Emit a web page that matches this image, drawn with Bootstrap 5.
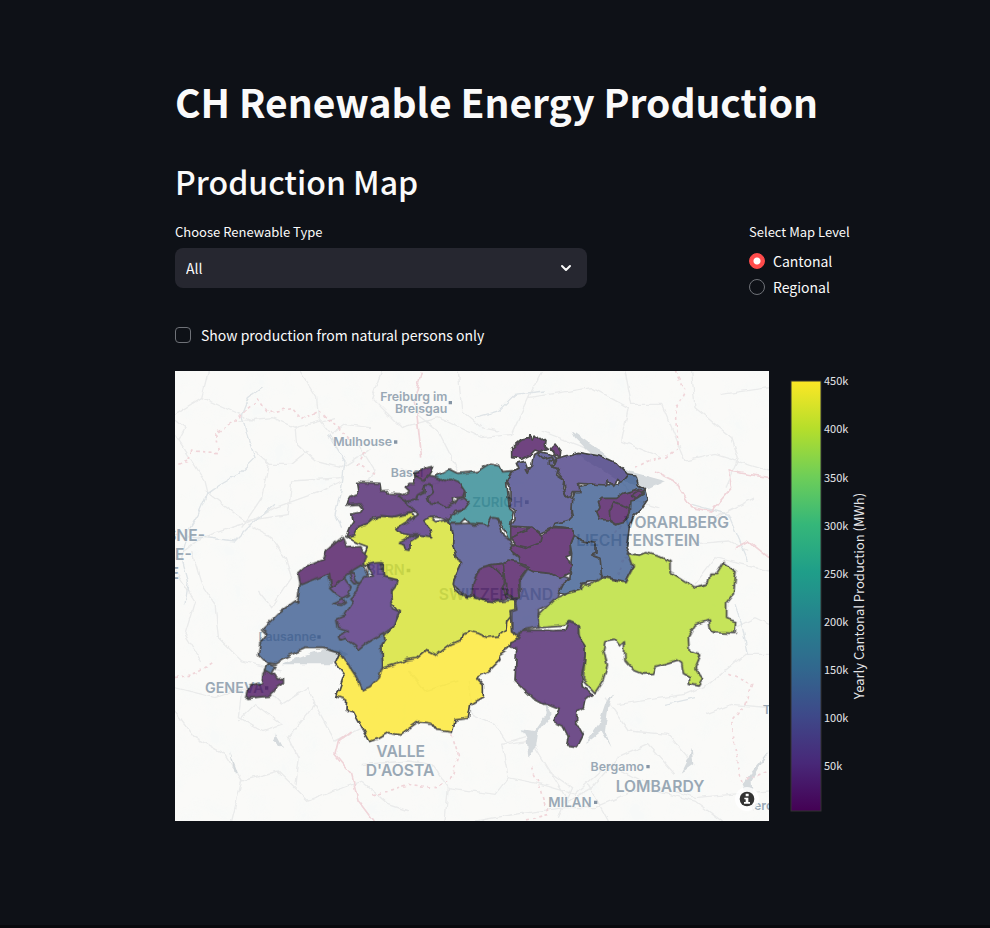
<!DOCTYPE html>
<html lang="en">
<head>
<meta charset="utf-8">
<meta name="viewport" content="width=device-width, initial-scale=1">
<title>CH Renewable Energy Production</title>
<link href="https://cdn.jsdelivr.net/npm/bootstrap@5.3.0/dist/css/bootstrap.min.css" rel="stylesheet">
<style>
body{background:#0e1117;color:#fafafa;font-family:"Noto Sans CJK SC","Open Sans",sans-serif;font-size:14px;line-height:24px}
.page{border-bottom:3px solid #08090d}
.content{max-width:895px;padding:75px 16px 80px 175px}
h1{font-size:39px;line-height:52px;font-weight:700;margin:0 0 34px;white-space:nowrap}
h2{font-size:32px;line-height:40px;font-weight:500;margin:0 0 21px}
.field-label{display:block;font-size:13px;line-height:20px;margin:0 0 6px;padding:0;float:none}
.type-col{width:412px}
.level-col{width:130px}
.type-select{background:#262730;border:0;border-radius:8px;color:#fafafa;height:40px;padding:0 11px;appearance:none}
.chev{right:15px;top:14px;pointer-events:none}
.choice{min-height:26px;gap:8px}
.form-check-input.dot,.form-check-input.tick{width:16px;height:16px;margin:0;background-color:#0e1117;border:1px solid #6f7278;float:none;flex:none}
.form-check-input.dot:checked{background:radial-gradient(circle,#fff 0 3px,#ff4b4b 4px);border-color:#ff4b4b}
.form-check-input.tick{border-radius:4px}
.natural{gap:10px;margin:23px 0 24px}
.map-box{flex:594 1 0;min-width:0;background:#fafaf8}
.scale-box{flex:110 1 0;min-width:0}
.map-box svg,.scale-box svg{display:block;width:100%;height:auto}
.places text{font-family:Inter,"Open Sans",sans-serif;font-weight:600;fill:#99a8b5;stroke:#fafaf8;stroke-width:3;paint-order:stroke}
.scale-box text{fill:#e4e5e8;font-family:"Noto Sans CJK SC","Open Sans",sans-serif}
.cantons path{stroke:#141414;stroke-width:5;stroke-linejoin:round}
.roads{fill:none;stroke:#eaebeb;stroke-width:4}
.rivers{fill:none;stroke:#dfe4e7;stroke-width:4}
.lakes{fill:#d5dadd}
.borders{fill:none;stroke:#f0d5d9;stroke-width:5}
</style>
</head>
<body>
<main class="page min-vh-100">
<div class="content">
<h1>CH Renewable Energy Production</h1>
<h2>Production Map</h2>
<div class="d-flex flex-wrap justify-content-between">
<div class="type-col">
<label class="field-label" for="type">Choose Renewable Type</label>
<div class="position-relative">
<select id="type" class="type-select w-100"><option>All</option><option>Solar</option><option>Wind</option><option>Hydro</option><option>Biomass</option></select>
<svg class="chev position-absolute" width="12" height="12" viewBox="0 0 12 12" fill="none" stroke="#fafafa" stroke-width="2" stroke-linecap="round" stroke-linejoin="round" aria-hidden="true"><path d="M2 4l4 4 4-4"/></svg>
</div>
</div>
<fieldset class="level-col">
<legend class="field-label">Select Map Level</legend>
<div class="choice d-flex align-items-center"><input class="form-check-input dot" type="radio" name="level" id="cantonal" checked><label for="cantonal">Cantonal</label></div>
<div class="choice d-flex align-items-center"><input class="form-check-input dot" type="radio" name="level" id="regional"><label for="regional">Regional</label></div>
</fieldset>
</div>
<div class="natural d-flex align-items-center"><input class="form-check-input tick" type="checkbox" id="natural"><label for="natural">Show production from natural persons only</label></div>

<div class="d-flex">
<div class="map-box">
<svg viewBox="0 0 1782 1350" role="img" aria-label="Map of yearly renewable production by canton">
<defs>
<filter id="rough" x="0" y="0" width="1782" height="1350" filterUnits="userSpaceOnUse"><feTurbulence type="fractalNoise" baseFrequency=".045" numOctaves="1" seed="8"/><feDisplacementMap in="SourceGraphic" scale="17" xChannelSelector="R" yChannelSelector="G"/></filter>
<filter id="soft" x="0" y="0" width="1782" height="1350" filterUnits="userSpaceOnUse"><feTurbulence type="fractalNoise" baseFrequency=".014" numOctaves="3" seed="4"/><feColorMatrix values="0 0 0 0 .925  0 0 0 0 .95  0 0 0 0 .94  3 0 0 0 -1.35"/></filter>
<clipPath id="frame"><path d="M0 0h1782v1350H0z"/></clipPath>
</defs>
<path fill="#fafaf8" d="M0 0h1782v1350H0z"/>
<path filter="url(#soft)" opacity=".5" d="M0 0h1782v1350H0z"/>
<g clip-path="url(#frame)">
<g filter="url(#rough)">
<g class="roads">
<path d="M100 0L80 80 0 130M80 80L170 120 240 150M0 145L30 170 10 210M375 0L425 80 430 140 470 190 510 160 585 170M190 150L290 140 360 170 480 140M360 165L365 220 420 270 500 290 585 235M240 240L285 280 350 280 400 240M280 280L260 380 200 470M100 370L90 330 0 190M90 360L210 450 340 430 350 330 500 320M0 560L80 500 230 450 300 410 440 360 500 330M220 460L290 500 330 560 350 620 290 710 250 660M50 540L80 640 120 700 130 800 200 870 320 900M0 600L60 690 30 790 80 870"/>
<path d="M0 1020L60 1100 150 1150 200 1230 170 1350M200 1230L310 1200 400 1290 560 1230 640 1300 700 1320M0 950L120 980 180 960 260 940 320 1000 400 950 420 1000 340 1100 370 1160 360 1240M190 1050L240 1000 320 1060 260 1080 190 1040 200 960M420 1000L480 1110 560 1070M560 1180L700 1170 770 1180 820 1250 810 1350M820 1250L960 1270 1000 1220 1100 1240 1200 1270 1300 1180 1400 1230 1560 1280 1782 1260M1000 1220L980 1120 1050 1100M880 930L890 1030 960 1060 1000 1120 1070 1110 1180 1290 1250 1250 1330 1160 1420 1120 1500 1210M900 1350L1020 1330 1170 1310 1260 1310 1400 1250 1560 1290 1640 1350M1240 1240L1300 1350M1150 1340L1190 1250 1120 1200"/>
<path d="M620 0L590 80 680 170 790 140 920 200 1010 190 1060 80 1100 0M850 0L860 120 920 170 970 180M700 110L790 180 850 300 760 350 680 290M550 220L600 300 570 350M1100 180L1230 230 1320 300 1380 390 1450 410M1060 80L1250 50 1360 110 1340 210 1460 260M1350 0L1370 100 1460 100 1530 270 1620 250 1782 300M1550 0L1560 110 1670 200 1690 260 1650 350M1640 70L1782 50M1620 440L1740 380M1540 520L1660 510 1720 540M1560 640L1620 560 1782 600M1640 790L1740 740 1782 760M1330 1000L1530 970 1600 940 1710 850 1782 850M1590 1030L1670 1000 1782 1010M1290 980L1360 1080 1480 1090 1540 1160"/>
</g>
<g class="rivers"><path d="M260 50L220 80 200 130 215 190 240 260 190 310 130 345 95 370 70 430 40 480 20 560 40 630 30 700M0 490L180 510 230 460 300 400M460 190L510 270 500 350 480 430 500 470M900 140L970 120 1020 70 1110 60M1550 400L1660 430 1720 570M700 900L750 960 850 930M1470 1000L1560 980M1720 850L1700 760 1680 700"/></g>
<g class="lakes"><path d="M1190 180L1290 250 1320 280 1360 300 1470 330 1420 355 1320 320 1190 240 1250 250 1200 200ZM1110 985L1130 1030 1085 1090 1080 1130 1060 1160 1055 1105 1040 1075 1080 1080 1115 1030ZM1315 970L1300 1010 1290 1080 1310 1130 1280 1080 1230 1120 1270 1060 1290 1000ZM1550 1130L1555 1180 1520 1205 1540 1165ZM1782 1140L1730 1230 1735 1320 1700 1240ZM300 1090L325 1135 295 1110ZM165 1140L190 1210 180 1210ZM320 880Q470 810 520 850L470 880 380 880Z"/></g>
<g class="borders">
<path stroke-dasharray="9 10" d="M10 280L40 270 50 240 130 245 125 185 180 150 210 120 250 85 280 125 350 110 380 145 430 120 480 160 530 210M570 240L550 280 600 310M1500 0L1530 60 1500 120 1510 230 1470 260 1420 270 1380 290M1310 500L1350 450 1370 410M1320 630L1350 560 1370 560M0 920L60 910 120 870M1660 910L1730 940 1710 1000 1670 1050 1680 1130 1700 1230 1782 1200M830 1090L850 1150 830 1220 780 1250 700 1240 590 1275M1070 1190L1100 1260 1120 1330 1040 1350"/>
<path d="M530 1080L490 1110 480 1150 530 1210 550 1290 595 1350"/><path d="M1440 300L1500 330 1550 410 1610 420 1670 350 1660 300 1782 320M1680 530L1720 510 1782 560M740 0L720 80 740 260"/>
</g>
</g>
<g class="places" font-size="37" text-anchor="end">
<text x="817" y="91">Freiburg im</text><text x="817" y="126">Breisgau</text><text x="651" y="226">Mulhouse</text><text x="745" y="319">Basel</text>
<text x="1044" y="408" font-size="40">ZURICH</text><text x="689" y="611" font-size="43">BERN</text><text x="424" y="811">Lausanne</text><text x="266" y="965" font-size="43">GENEVA</text><text x="1407" y="1201">Bergamo</text><text x="1250" y="1307" font-size="40">MILAN</text>
<g font-size="47"><text x="1662" y="472">VORARLBERG</text><text x="1575" y="524">LIECHTENSTEIN</text><text x="1134" y="687">SWITZERLAND</text><text x="750" y="1158">VALLE</text><text x="778" y="1215">D'AOSTA</text><text x="1588" y="1264">LOMBARDY</text><text x="90" y="510">SNE-</text><text x="50" y="567">E-</text><text x="12" y="624">E</text></g>
<g text-anchor="start"><text x="1763" y="1028">T</text><text x="1737" y="1316">ero</text></g>
</g>
<path fill="#8695a5" d="M821 90h10v10h-10zM657 208h10v10h-10zM1050 388h11v11h-11zM695 593h11v11h-11zM427 793h10v10h-10zM1414 1182h10v10h-10zM1257 1289h10v10h-10zM270 946h10v10h-10z"/>
</g>
<g class="cantons" opacity=".77" filter="url(#rough)">
<path fill="#fde725" d="M495 842L480 877 507 912 485 977 515 987 513 1017 535 1022 560 1067 585 1112 610 1102 640 1085 675 1092 730 1052 770 1057 785 1077 832 1084 840 1047 880 1042 887 999 925 977 925 942 905 920 940 902 975 867 972 852 1000 832 1030 797 1010 782 1007 737 850 780 620 830Z"/>
<path fill="#d5e226" d="M513 497L550 467 585 455 610 435 655 437 710 427 745 447 765 437 785 452 815 447 827 459 835 487 833 517 845 567 860 577 837 627 835 642 840 657 870 677 895 677 920 687 965 692 1020 687 1020 722 1005 722 1007 737 995 752 993 777 970 795 935 799 910 787 880 780 865 787 860 807 825 822 785 852 755 837 725 862 695 867 655 882 623 892 620 827 630 792 655 767 673 727 650 697 650 657 665 627 625 617 625 577 570 582 565 557 577 527 545 515Z"/>
<g transform="translate(465 147)">
<path fill="#471a69" d="M80 187L150 190 153 213 175 212 178 220 213 222 218 240 225 245 262 252 258 270 240 278 190 290 150 287 130 292 120 308 85 320 75 345 48 350 60 320 70 305 65 285 90 280 100 265 90 252 50 255 62 230 85 220Z"/>
<path fill="#414487" d="M362 312L420 310 430 315 470 310 480 295 495 290 505 300 520 350 540 360 550 380 545 395 570 415 570 430 485 435 450 445 430 490 430 525 410 530 370 495 372 480 395 430 380 420 368 370 370 340Z"/>
<path fill="#482878" d="M285 195L300 195 308 215 295 230 300 248 330 252 345 262 375 250 385 235 410 232 420 245 412 265 375 272 360 300 320 290 300 292 280 300 300 325 305 350 270 345 240 345 215 340 200 325 240 300 265 280 245 262 225 245 260 240 262 225 285 215ZM205 370L225 360 240 345 262 350 240 365 240 388 225 385 222 375Z"/>
<path fill="#471a69" d="M320 170L360 175 385 175 395 205 405 210 400 230 370 235 372 250 345 262 325 250 298 248 292 230 310 215 300 195 285 195 280 215 262 225 258 240 225 245 205 230 240 215 225 200 235 190 250 190 255 180 255 160 280 165Z"/>
<path fill="#46085c" d="M255 160L278 150 285 145 308 140 300 158 295 165 280 180 260 170Z"/>
</g>
<path fill="#46085c" transform="translate(-15 -18)" d="M520 515L530 548 572 545 590 575 578 600 485 670 478 625 440 650 392 665 385 622 405 605 460 585 470 555Z"/>
<path fill="#25848e" transform="translate(585 -18)" d="M195 335L240 312 265 325 320 320 360 295 385 300 395 320 425 318 410 350 418 430 430 440 422 480 425 525 415 522 400 490 385 460 365 458 355 480 300 475 285 460 270 475 238 475 240 455 262 440 285 430 300 410 285 395 285 380 265 350 240 340 225 350Z"/>
<g transform="translate(135 567)">
<path fill="#35578d" d="M232 130L240 75 325 40 335 85 400 30 430 12 445 45 440 100 490 220 495 240 485 255 488 320 478 350 450 380 428 390 415 360 395 330 385 310 360 280 310 265 255 265 200 290 165 312 140 308 115 282 120 250 143 222 128 207 180 155 230 120Z"/>
<path fill="#482878" d="M425 62L435 50 460 48 440 15 455 10 485 8 490 50 530 60 528 75 515 90 517 145 538 155 530 172 520 200 490 222 465 235 440 250 415 270 405 255 375 235 360 240 355 230 385 215 355 205 350 175 375 165 400 125 390 115 410 95 412 80ZM332 88L372 52 380 65 393 80 385 105 365 115 350 105ZM336 132L355 125 370 118 376 128 365 136ZM388 42L400 38 408 62 415 68 405 72 395 60Z"/>
<path fill="#46085c" d="M135 330L165 345 172 358 190 355 190 368 165 385 150 408 110 412 80 415 85 390 90 375 125 370 130 340Z"/>
<path fill="#35578d" d="M142 312L168 320 155 342 133 330Z"/>
</g>
<path fill="#414487" d="M1035 627L1055 597 1070 582 1125 602 1185 622 1165 637 1150 667 1145 687 1090 717 1095 767 1045 777 1030 795 1010 782 1010 722 1025 717 1020 677Z"/>
<path fill="#46085c" d="M895 637L915 592 950 582 1010 572 1055 597 1035 627 1035 675 1020 690 1000 680 965 692 920 687 890 672Z"/>
<g transform="translate(945 147)">
<path fill="#35578d" d="M265 200L300 192 350 190 380 195 415 165 437 168 445 195 462 205 472 240 455 265 430 290 418 320 415 345 410 380 432 430 405 485 340 470 250 345 245 325 190 318 195 308 240 300 248 285 245 245 255 215Z"/>
<path fill="#453882" d="M200 115L240 105 265 97 330 108 380 130 415 165 395 190 380 175 370 200 355 180 345 195 300 192 265 190 270 215 250 215 240 240 225 220 222 180 200 155 190 140Z"/>
<path fill="#424086" d="M50 180L65 155 90 148 82 130 105 123 115 150 125 140 130 105 150 95 190 105 200 115 180 140 205 145 200 165 222 180 218 205 230 230 248 240 245 280 250 290 240 300 195 310 190 322 150 340 125 322 62 318 75 300 75 270 60 260 60 200Z"/>
<path fill="none" d="M140 98L160 115 185 108 192 122 175 118 175 135 192 140 200 120"/>
<path fill="#46085c" d="M65 85L95 60 118 55 120 42 130 60 135 45 150 62 165 58 163 75 175 85 150 95 135 90 120 105 95 118 85 112 65 110ZM180 85L190 85 195 72 212 95 210 110 195 105 190 95ZM105 147L118 143 112 160Z"/>
<path fill="#35578d" d="M250 345L275 362 318 370 318 400 305 405 330 415 335 465 335 480 275 490 270 510 225 523 205 520 220 490 240 475 245 400 240 370Z"/>
<path fill="#46085c" d="M62 355L125 322 155 345 190 322 248 325 250 345 240 370 242 405 228 410 245 440 238 460 210 475 180 460 130 455 90 435 85 410 60 390 75 370ZM62 318L95 325 125 322 155 345 150 370 110 385 80 378 62 355ZM0 435L40 430 55 420 80 425 115 440 85 480 90 530 70 535 50 520 50 490 40 490 40 470 25 455ZM40 430L45 490 38 500 48 530"/>
<path fill="#46085c" d="M325 245L335 235 380 235 400 220 450 205 460 215 440 235 420 240 418 280 405 305 380 315 355 300 330 298 320 275 330 260ZM372 245L405 258 418 265 415 290 400 308 380 313 360 300 358 275ZM425 225L445 212 460 222 440 235Z"/>
</g>
<path fill="#b7de2b" transform="translate(1185 507)" d="M175 40L205 45 230 38 270 50 300 65 300 95 375 142 415 130 420 100 440 100 460 68 498 95 490 165 470 190 470 235 497 245 495 280 435 278 420 265 418 240 375 255 355 290 358 335 392 345 375 385 398 415 385 435 358 430 358 410 340 400 335 370 320 360 255 380 248 400 220 402 190 390 165 360 163 305 150 318 135 300 105 305 100 330 112 375 100 420 75 458 40 420 45 320 28 300 25 260 0 245 -20 255 -90 260 -95 225 -50 180 0 158 30 150 38 130 60 135 95 112 165 125 190 78Z"/>
<path fill="#471a69" transform="translate(675 627)" d="M370 150L420 150 460 152 495 150 505 125 535 135 535 165 555 195 555 230 545 290 550 320 577 342 555 360 550 385 530 395 530 430 550 465 532 500 500 495 505 470 490 440 460 425 478 385 445 372 430 372 400 355 345 300 350 205 327 200 330 185 355 175Z"/>
</g>
<circle cx="1716" cy="1284" r="36" fill="#fff" opacity=".8"/><circle cx="1716" cy="1284" r="22" fill="#333"/><path fill="#fff" d="M1712 1268h9v8h-9zM1708 1280h12v13h5v5h-18v-5h5v-8h-4z"/>
</svg>
</div>
<div class="scale-box">
<svg viewBox="0 0 110 450" role="img" aria-label="Colour scale, yearly cantonal production">
<defs><linearGradient id="viridis" x1="0" y1="1" x2="0" y2="0"><stop offset="0" stop-color="#440154"/><stop offset=".111" stop-color="#482878"/><stop offset=".222" stop-color="#3e4989"/><stop offset=".333" stop-color="#31688e"/><stop offset=".444" stop-color="#26828e"/><stop offset=".556" stop-color="#1f9e89"/><stop offset=".667" stop-color="#35b779"/><stop offset=".778" stop-color="#6ece58"/><stop offset=".889" stop-color="#b5de2b"/><stop offset="1" stop-color="#fde725"/></linearGradient></defs>
<rect x="22" y="10" width="30" height="430" fill="url(#viridis)" stroke="#333"/>
<g font-size="11"><text x="55" y="14">450k</text><text x="55" y="62">400k</text><text x="55" y="111">350k</text><text x="55" y="159">300k</text><text x="55" y="207">250k</text><text x="55" y="255">200k</text><text x="55" y="303">150k</text><text x="55" y="351">100k</text><text x="55" y="399">50k</text></g>
<text font-size="13" text-anchor="middle" transform="translate(95 225) rotate(-90)">Yearly Cantonal Production (MWh)</text>
</svg>
</div>
</div>
</div>
</main>
<script src="https://cdn.jsdelivr.net/npm/bootstrap@5.3.0/dist/js/bootstrap.bundle.min.js"></script>
</body>
</html>
